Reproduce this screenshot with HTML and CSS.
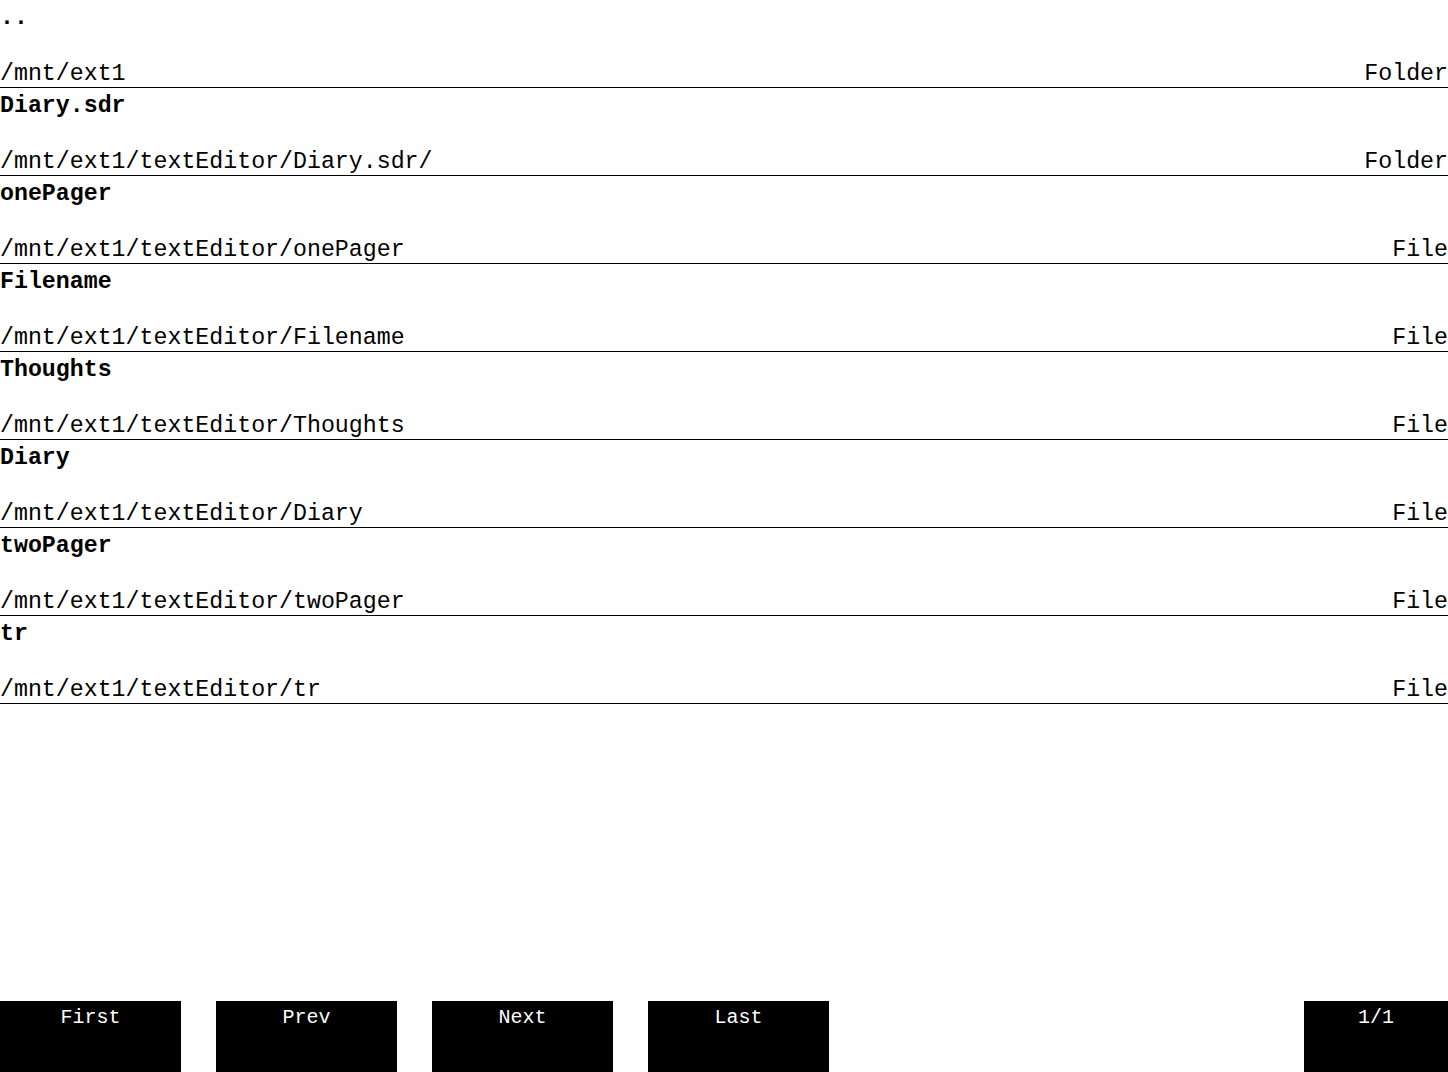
FILE: index.html
```html
<!DOCTYPE html>
<html>
<head>
<meta charset="utf-8">
<link rel="stylesheet" href="styles.css">
</head>
<body>
<div class="page">
  <ul class="list">
    <li class="row"><div class="name">..</div><div class="meta"><span class="path">/mnt/ext1</span><span class="kind">Folder</span></div></li>
    <li class="row"><div class="name">Diary.sdr</div><div class="meta"><span class="path">/mnt/ext1/textEditor/Diary.sdr/</span><span class="kind">Folder</span></div></li>
    <li class="row"><div class="name">onePager</div><div class="meta"><span class="path">/mnt/ext1/textEditor/onePager</span><span class="kind">File</span></div></li>
    <li class="row"><div class="name">Filename</div><div class="meta"><span class="path">/mnt/ext1/textEditor/Filename</span><span class="kind">File</span></div></li>
    <li class="row"><div class="name">Thoughts</div><div class="meta"><span class="path">/mnt/ext1/textEditor/Thoughts</span><span class="kind">File</span></div></li>
    <li class="row"><div class="name">Diary</div><div class="meta"><span class="path">/mnt/ext1/textEditor/Diary</span><span class="kind">File</span></div></li>
    <li class="row"><div class="name">twoPager</div><div class="meta"><span class="path">/mnt/ext1/textEditor/twoPager</span><span class="kind">File</span></div></li>
    <li class="row"><div class="name">tr</div><div class="meta"><span class="path">/mnt/ext1/textEditor/tr</span><span class="kind">File</span></div></li>
  </ul>
  <div class="pager">
    <div class="btn">First</div>
    <div class="btn">Prev</div>
    <div class="btn">Next</div>
    <div class="btn">Last</div>
    <div class="btn count">1/1</div>
  </div>
</div>
</body>
</html>
```

FILE: styles.css
```css
html, body {
  margin: 0;
  padding: 0;
  background: #fff;
}
body {
  font-family: "Liberation Mono", "DejaVu Sans Mono", monospace;
  color: #000;
}
.page {
  display: flex;
  flex-direction: column;
  height: 1072px;
  overflow: hidden;
}
.list {
  list-style: none;
  margin: 0;
  padding: 0;
  flex: 1;
}
.row {
  height: 87px;
  border-bottom: 1px solid #000;
  display: flex;
  flex-direction: column;
  font-size: 23.25px;
}
.name {
  font-weight: bold;
  line-height: 37px;
}
.meta {
  margin-top: auto;
  display: flex;
  justify-content: space-between;
  line-height: 25px;
}
.pager {
  display: flex;
  gap: 35px;
  height: 71px;
}
.btn {
  width: 181px;
  background: #000;
  color: #fff;
  font-size: 20px;
  text-align: center;
  padding-top: 5px;
  box-sizing: border-box;
}
.btn.count {
  width: 144px;
  margin-left: auto;
}
```
